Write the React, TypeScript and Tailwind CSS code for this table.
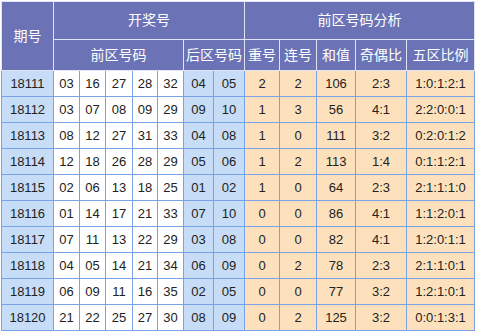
import React from "react";

type Row = {
  issue: string;
  front: string[];
  back: string[];
  repeat: string;
  consec: string;
  sum: string;
  oddEven: string;
  zones: string;
};

const rows: Row[] = [
  { issue: "18111", front: ["03", "16", "27", "28", "32"], back: ["04", "05"], repeat: "2", consec: "2", sum: "106", oddEven: "2:3", zones: "1:0:1:2:1" },
  { issue: "18112", front: ["03", "07", "08", "09", "29"], back: ["09", "10"], repeat: "1", consec: "3", sum: "56", oddEven: "4:1", zones: "2:2:0:0:1" },
  { issue: "18113", front: ["08", "12", "27", "31", "33"], back: ["04", "08"], repeat: "1", consec: "0", sum: "111", oddEven: "3:2", zones: "0:2:0:1:2" },
  { issue: "18114", front: ["12", "18", "26", "28", "29"], back: ["05", "06"], repeat: "1", consec: "2", sum: "113", oddEven: "1:4", zones: "0:1:1:2:1" },
  { issue: "18115", front: ["02", "06", "13", "18", "25"], back: ["01", "02"], repeat: "1", consec: "0", sum: "64", oddEven: "2:3", zones: "2:1:1:1:0" },
  { issue: "18116", front: ["01", "14", "17", "21", "33"], back: ["07", "10"], repeat: "0", consec: "0", sum: "86", oddEven: "4:1", zones: "1:1:2:0:1" },
  { issue: "18117", front: ["07", "11", "13", "22", "29"], back: ["03", "08"], repeat: "0", consec: "0", sum: "82", oddEven: "4:1", zones: "1:2:0:1:1" },
  { issue: "18118", front: ["04", "05", "14", "21", "34"], back: ["06", "09"], repeat: "0", consec: "2", sum: "78", oddEven: "2:3", zones: "2:1:1:0:1" },
  { issue: "18119", front: ["06", "09", "11", "16", "35"], back: ["02", "05"], repeat: "0", consec: "0", sum: "77", oddEven: "3:2", zones: "1:2:1:0:1" },
  { issue: "18120", front: ["21", "22", "25", "27", "30"], back: ["08", "09"], repeat: "0", consec: "2", sum: "125", oddEven: "3:2", zones: "0:0:1:3:1" },
];

const colWidths = [52, 26, 26, 27, 25, 26, 30, 31, 35, 37, 39, 51, 68];

const th = "border border-[#dfe3f3] bg-[#6b73b6] text-white font-normal text-[14px] p-0 text-center";
const td = "border border-[#78a3e6] h-[26px] p-0 text-center text-[13px] text-[#222]";

export default function App() {
  return (
    <div className="w-[479px] h-[333px] bg-white pl-px pt-px" style={{ fontFamily: '"Liberation Sans", Arial, "Noto Sans CJK SC", sans-serif' }}>
      <table className="table-fixed border-collapse w-[473px] border border-[#78a3e6]">
        <colgroup>
          {colWidths.map((w, i) => (
            <col key={i} style={{ width: w }} />
          ))}
        </colgroup>
        <thead>
          <tr className="h-[38px]">
            <th rowSpan={2} className={th}>期号</th>
            <th colSpan={7} className={th}>开奖号</th>
            <th colSpan={5} className={th}>前区号码分析</th>
          </tr>
          <tr className="h-[31px]">
            <th colSpan={5} className={th}>前区号码</th>
            <th colSpan={2} className={th}>后区号码</th>
            <th className={th}>重号</th>
            <th className={th}>连号</th>
            <th className={th}>和值</th>
            <th className={th}>奇偶比</th>
            <th className={th}>五区比例</th>
          </tr>
        </thead>
        <tbody>
          {rows.map((r) => (
            <tr key={r.issue}>
              <td className={`${td} bg-[#c7ddf7]`}>{r.issue}</td>
              {r.front.map((n, i) => (
                <td key={i} className={`${td} bg-white`}>{n}</td>
              ))}
              {r.back.map((n, i) => (
                <td key={i} className={`${td} bg-[#c7ddf7]`}>{n}</td>
              ))}
              <td className={`${td} bg-[#fde1bd]`}>{r.repeat}</td>
              <td className={`${td} bg-[#fde1bd]`}>{r.consec}</td>
              <td className={`${td} bg-[#fde1bd]`}>{r.sum}</td>
              <td className={`${td} bg-[#fde1bd]`}>{r.oddEven}</td>
              <td className={`${td} bg-[#fde1bd]`}>{r.zones}</td>
            </tr>
          ))}
        </tbody>
      </table>
    </div>
  );
}
